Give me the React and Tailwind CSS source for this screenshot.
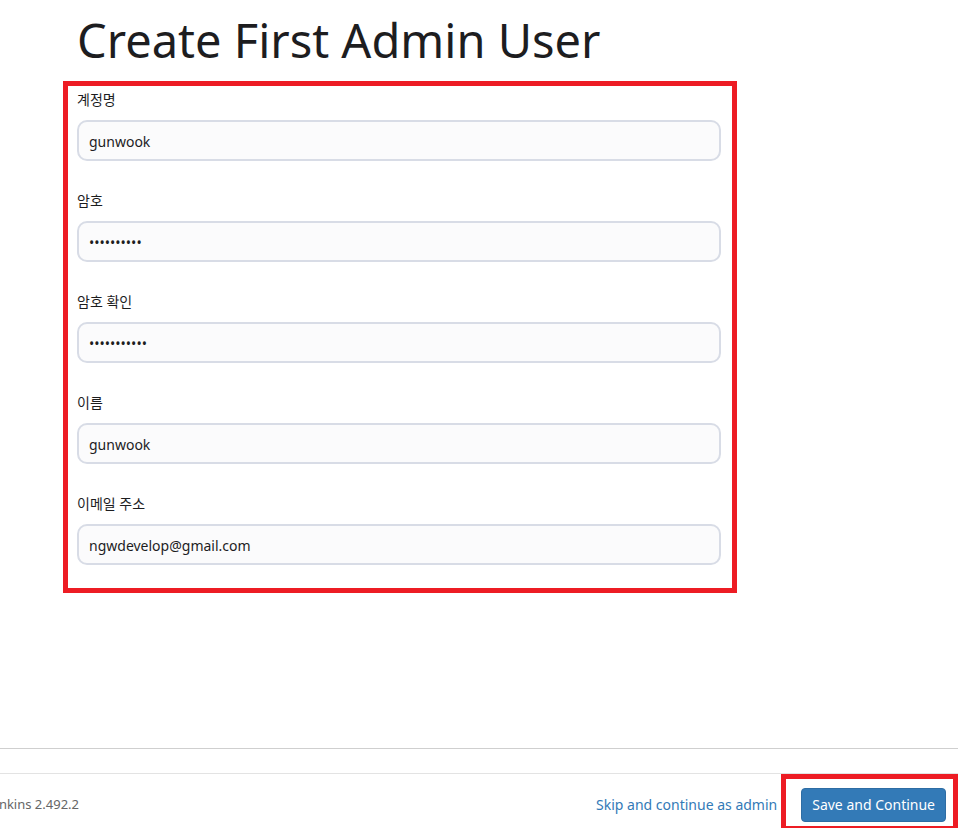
import React from "react";

const fields = [
  { label: "계정명", type: "text", value: "gunwook" },
  { label: "암호", type: "password", value: "gunwook123" },
  { label: "암호 확인", type: "password", value: "gunwook1234" },
  { label: "이름", type: "text", value: "gunwook" },
  { label: "이메일 주소", type: "text", value: "ngwdevelop@gmail.com" },
];

function Field({ label, type, value }) {
  return (
    <div className="mb-[29px] last:mb-0">
      <label className="block h-5 mb-[11px] pt-[1px] text-[14px] leading-5 text-[#1d1d1f]">
        {label}
      </label>
      <input
        type={type}
        readOnly
        defaultValue={value}
        className="block w-full h-[41px] px-[10px] pt-[1px] rounded-[10px] border-2 border-[#d8dce6] bg-[#fbfbfc] text-[14px] text-[#1d1d1f] outline-none"
      />
    </div>
  );
}

export default function App() {
  return (
    <div className="w-[958px] h-[828px] overflow-hidden bg-white flex flex-col font-['Noto_Sans','Noto_Sans_CJK_KR',sans-serif]">
      {/* 제목 */}
      <h1 className="pl-[77px] pt-[12px] text-[47px] leading-[56px] font-normal text-[#1d1d1f] mb-[13px]">
        Create First Admin User
      </h1>

      {/* 입력 폼 */}
      <form className="ml-[63px] w-[674px] border-[5px] border-[#ed1c24] pl-[9px] pr-[11px] pt-[3px] pb-[23px]">
        {fields.map((f) => (
          <Field key={f.label} {...f} />
        ))}
      </form>

      <div className="mt-auto">
        <hr className="border-0 border-t border-[#cfcfcf]" />
        <div className="h-6" />
        <footer className="h-[55px] pt-[7px] border-t border-[#e3e3e3] flex items-center overflow-hidden">
          <span className="-ml-[12px] text-[13px] text-[#666]">Jenkins 2.492.2</span>
          <a href="#" className="ml-auto text-[14px] text-[#337ab7]">
            Skip and continue as admin
          </a>
          <span className="relative ml-[24px] mr-[12px]">
            <button className="h-[34px] px-[10px] rounded-[4px] bg-[#337ab7] border border-[#2e6da4] text-white text-[14px]">
              Save and Continue
            </button>
            <span className="absolute -left-[20px] -top-[14px] -right-[12px] -bottom-[9px] border-[5px] border-[#ed1c24] pointer-events-none" />
          </span>
        </footer>
      </div>
    </div>
  );
}
